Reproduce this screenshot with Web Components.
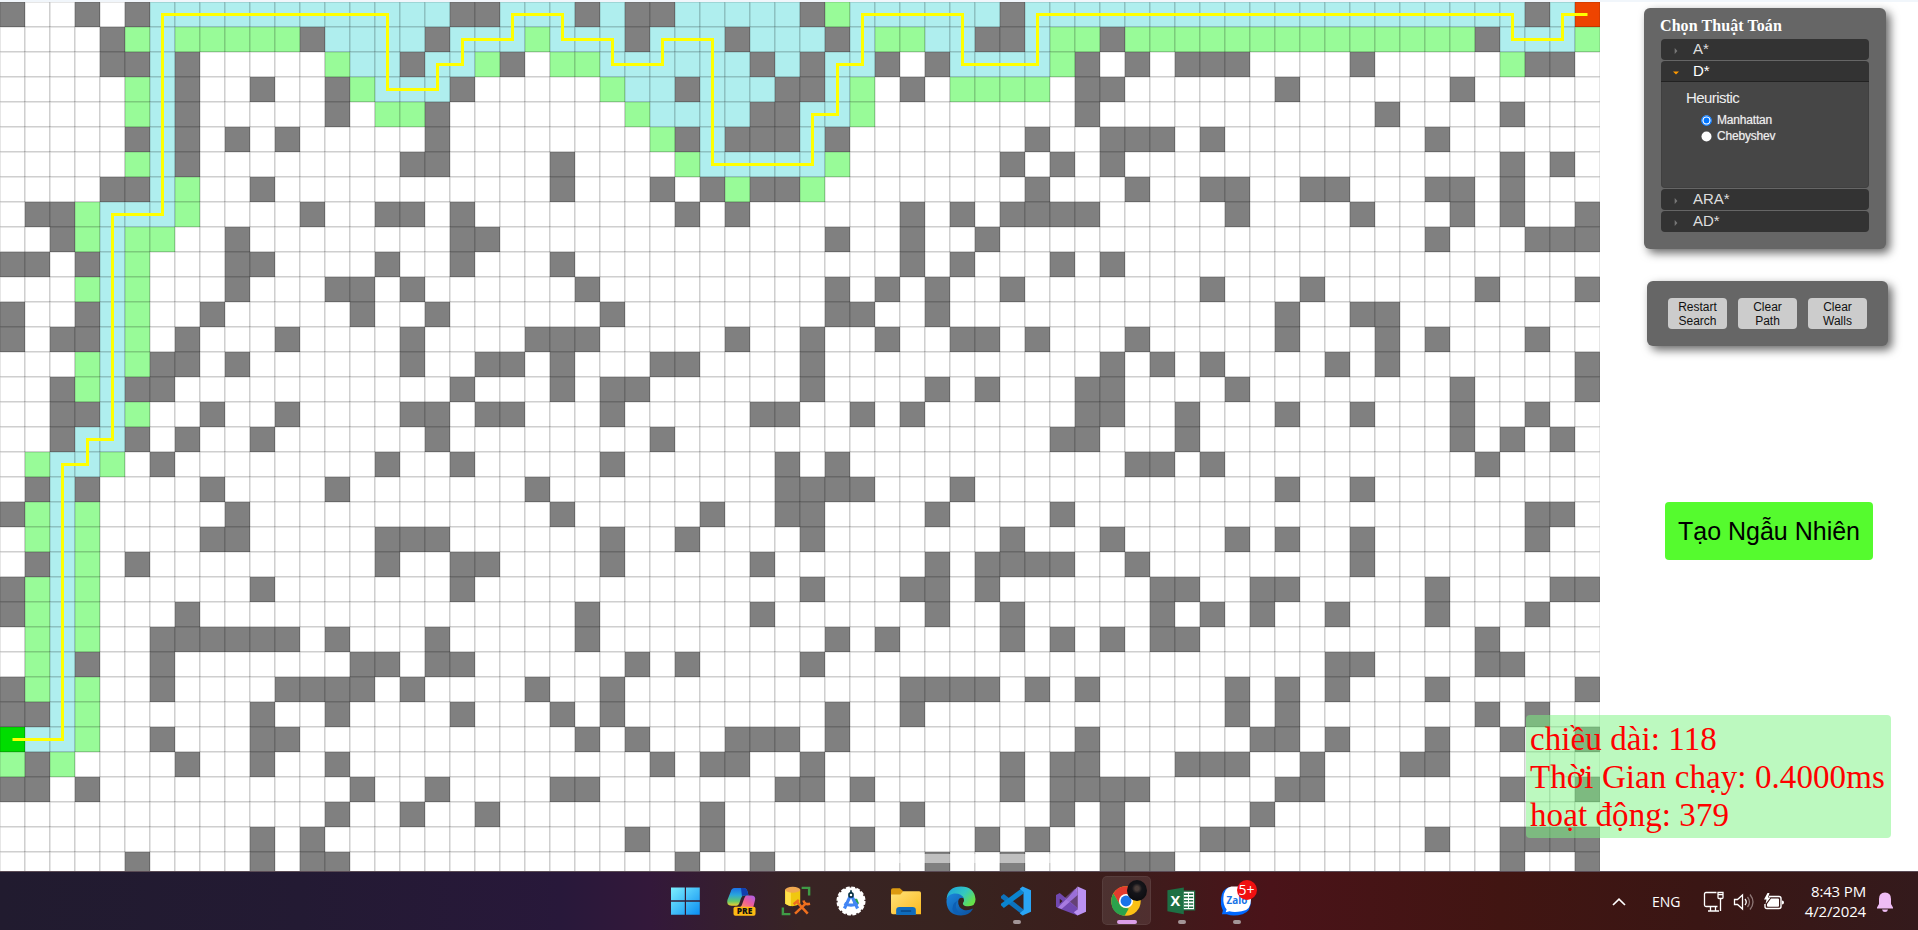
<!DOCTYPE html>
<html lang="vi">
<head>
<meta charset="utf-8">
<title>PathFinding</title>
<style>
html,body{margin:0;height:100%;background:#fff}
body{overflow:hidden;font-family:"Liberation Sans",Arial,sans-serif}
</style>
</head>
<body>
<path-app></path-app>
<script>
const define = (name, html, init) => customElements.define(name, class extends HTMLElement {
  constructor() {
    super();
    this.attachShadow({ mode: 'open' }).innerHTML = html;
  }
  connectedCallback() { if (init && !this.ready) { this.ready = true; init.call(this, this.shadowRoot); } }
});

// '#' wall, 'g' opened, 'b' closed, 'S' start, 'E' end, '.' free
const ROWS = `
#..#.#bbbbbbbbbb bb##bbb#b##bbbbb #gbbbbbb#bbbbbbb bbbbbbbbbbbbb#bE
....#gbggggg#bbb b#bbbgbbb#bbb#bb b#bggbb##bgg#ggg ggggggggggg#bbbg
....##b#.....gbb #bbg#.ggbbbbbb#b #bb#.#bbbbg#.#.# ##....#.....g##.
.....gb#..#..#gb bb#.....gbb#bbb# #bg.#.gggg.##... ...#......#.....
.....gb#.....#.g g#.......gbbbb## bbg........#.... .......#....#...
.....#b#.#.#.... .#........g#b### b#.......#..###. #........#......
.....gb#........ ##....#....gbbbb bg......#.#.#... ............#.#.
....##bg..#..... ......#...#.#g## g........#...#.. ##..##...##.#...
.##gbbbg....#..# #.#........#.#.. ....#.#.####.... .#....#...#.#..#
..#gbgg..#...... ..##............ .#..#..#........ .........#...###
##.#bg...##....# ..#...#......... ....#.#...#.#... ................
...gbg...#...##. #......#........ .#.#.#..#....... #...#......#...#
#..#bg..#.....#. .#......#....... .##..#.......... ...#..##........
#.##bg.#...#.... #....###.....#.. #..#..##.#...#.. ...#...#.#...#..
...gbg##.#...... #..##.#...##.... #...........#.#. #....#.#.......#
..#gb##......... ..#...#.##...... #....#.#...##... .#........#....#
..##bg..#..#.... ##.##...#.....## ..#.#......##..# ...#..#...#..#..
..#bb#.#..#..... .#........#..... ..........##...# ..........#.#.#.
.gbbg.#........# ..#.....#......# .#...........##. #..........#....
.#b#....#....#.. .....#.........# ###...#......... ...#..#.........
#gbg.....#...... ......#.....#..# #....#....#..... .............##.
.gbg....##.....# ##......#..#.... #.......#...#... .#.#..#......#..
.#bg.#.........# ..##....#.....#. .....#.####..#.. ......#.........
#gbg......#..... ..#............. #...##.#......## ..##.....#....##
#gbg...#........ .......#......#. .....#..#.....#. #.#..#...#...#..
.gbg..######.#.. .#.....#........ .#.#....#.#.#.## ...........#....
.gb#..#.......## .##......#.#.... #............... .....##....##...
#gbg..#....####. #....#..#....... ....####.#.#.... .#.#.#...#.....#
##bg......#..#.. ..#...#.#....... .#..#........... .#.#.......#.#..
Sbbg..#...##.... .......#.#...### .#.........#.... ..##.#...#..#..#
g#g....#..#..#.. ..........#.##.. #.......#.##...# ##..#...##......
##.#..........#. .#....##.......# #.#.....#.####.. ...##.......#..#
.............#.. #..#........#... ....#.....#.#... ..#.............
..........#.#... .........#..#... ..#....#.#..#... ##.......#..####
.....#....#.##.. ...........#..#. .....#..#...###. ............#..#`
  .trim().split('\n').map(r => r.replace(/ /g, ''));

const ROUTE = [[0,29],[2,29],[2,18],[3,18],[3,17],[4,17],[4,8],[6,8],[6,0],[15,0],[15,3],[17,3],[17,2],[18,2],[18,1],[20,1],[20,0],[22,0],[22,1],[24,1],[24,2],[26,2],[26,1],[28,1],[28,6],[32,6],[32,4],[33,4],[33,2],[34,2],[34,0],[38,0],[38,2],[41,2],[41,0],[60,0],[60,1],[62,1],[62,0],[63,0]];

define('grid-board', `
<style>
:host{display:block;position:relative;width:1600px;height:869px;overflow:hidden}
svg{display:block}
rect{stroke:#000;stroke-opacity:.2;fill:#fff}
.w{fill:#808080}.g{fill:#98fb98}.b{fill:#afeeee}.S{fill:#00dd00}.E{fill:#ee4400}
path{fill:none;stroke:#ff0;stroke-width:3}
.veil{position:absolute;left:885px;top:852px;width:180px;height:9px;background:rgba(255,255,255,.5)}
</style>
<svg width="1600" height="875" viewBox="0 0 1600 875"></svg><div class="veil"></div>`, function (root) {
  const svg = root.querySelector('svg');
  let s = '';
  ROWS.forEach((row, y) => [...row].forEach((c, x) => {
    s += `<rect class="${c === '#' ? 'w' : c === '.' ? 'f' : c}" x="${x * 25}" y="${y * 25}" width="25" height="25"/>`;
  }));
  s += `<path d="M${ROUTE.map(([x, y]) => `${x * 25 + 12.5} ${y * 25 + 12.5}`).join('L')}"/>`;
  svg.innerHTML = s;
});

define('float-panel', `
<style>
:host{display:block;box-sizing:border-box;background:#666;border-radius:6px;box-shadow:4px 4px 10px rgba(0,0,0,.6)}
</style><slot></slot>`);

define('algo-item', `
<style>
:host{display:block;margin-bottom:1px;letter-spacing:0}
.h{box-sizing:border-box;height:21px;background:#333;border-radius:4px;display:flex;align-items:center;padding-left:12px;font-size:15px;line-height:18px;color:#ddd}
svg{width:6px;height:8px;margin-right:14px;position:relative;top:1px}
.h span{position:relative;top:-1px}
.c{display:none}
:host([open]) .h{border-radius:4px 4px 0 0;color:#fff;box-shadow:inset 0 -1px #222}
:host([open]) .c{display:block;box-sizing:border-box;height:106px;background:#464646;border:1px solid #404040;border-top:0;border-radius:0 0 4px 4px;padding:7px 0 0 24px}
.d{display:none}
:host([open]) .d{display:block}:host([open]) .r{display:none}
</style>
<div class="h"><svg viewBox="0 0 6 8"><path class="r" d="M1.700 1 4.400 4 1.700 7z" fill="#777"/><path class="d" d="M0 2.500h6L3 5.500z" fill="#f90"/></svg><span></span></div>
<div class="c"><slot></slot></div>`, function (root) {
  root.querySelector('.h span').textContent = this.getAttribute('label');
});

define('radio-row', `
<style>
:host{display:flex;align-items:center;height:16px;padding-left:15px;font-size:12px;line-height:16px;color:#eee;letter-spacing:-.19px;text-shadow:0 0 1px rgba(255,255,255,.5)}
svg{width:11px;height:11px;margin-right:5px}
.on{display:none}
:host([checked]) .on{display:block}
</style>
<svg viewBox="0 0 11 11"><circle cx="5.500" cy="5.500" r="5" fill="#fff"/><g class="on"><circle cx="5.500" cy="5.500" r="4.700" fill="#fff" stroke="#0075ff" stroke-width="1.200"/><circle cx="5.500" cy="5.500" r="2.900" fill="#0075ff"/></g></svg><slot></slot>`);

define('heuristic-options', `
<style>
:host{display:block}
.t{font-size:15px;line-height:18px;letter-spacing:-.57px;color:#eee;margin-bottom:5px}
</style>
<div class="t">Heuristic</div>
<radio-row checked>Manhattan</radio-row><radio-row>Chebyshev</radio-row>`);

define('ctl-button', `
<style>
:host{display:flex;align-items:center;justify-content:center;box-sizing:border-box;width:59px;height:31px;background:#ccc;border-radius:4px;font-size:12px;line-height:14px;text-align:center;color:#111}
</style><span><slot></slot></span>`);

define('stats-box', `
<style>
:host{display:block;box-sizing:border-box;width:365px;height:123px;padding:5px 4px;background:rgba(121,243,128,.5);border-radius:4px;color:red;font:33px/38px "Liberation Serif","Times New Roman",serif;letter-spacing:.08px;white-space:nowrap}
</style>
<div>chiều dài: 118</div><div>Thời Gian chạy: 0.4000ms</div><div>hoạt động: 379</div>`);

define('side-bar', `
<style>
:host{display:flex;flex-direction:column;width:318px}
.algo{width:242px;height:241px;margin:6px 0 0 44px;padding:8px 17px 0}
h3{margin:0 0 4px -1px;font:bold 16px/19px "Liberation Serif","Times New Roman",serif;letter-spacing:.08px;color:#fff;white-space:nowrap}
.ctl{width:241px;height:65px;margin:32px 0 0 47px;padding:17px 21px;display:flex;gap:11px}
.rnd{width:208px;height:58px;margin:156px 0 0 65px;border:0;padding:0;border-radius:4px;background:#55fb2e;color:#000;font:25px "Liberation Sans",Arial,sans-serif}
</style>
<float-panel class="algo"><h3>Chọn Thuật Toán</h3>
<algo-item label="A*"></algo-item>
<algo-item label="D*" open><heuristic-options></heuristic-options></algo-item>
<algo-item label="ARA*"></algo-item>
<algo-item label="AD*"></algo-item></float-panel>
<float-panel class="ctl"><ctl-button>Restart<br>Search</ctl-button><ctl-button>Clear<br>Path</ctl-button><ctl-button>Clear<br>Walls</ctl-button></float-panel>
<button class="rnd">Tạo Ngẫu Nhiên</button>`);

const ICONS = {
  win: `<defs><linearGradient id="a" x1="0" y1="0" x2="1" y2="1"><stop offset="0" stop-color="#7df0ff"/><stop offset="1" stop-color="#0a8df2"/></linearGradient></defs><path fill="url(#a)" d="M0 1.500h14.700V15.300H0zM16 1.500h14.700v13.800H16zM0 16.700h14.700v14H0zM16 16.700h14.700v14H16z"/>`,
  copilot: `<defs><linearGradient id="a" x1="0" y1="0" x2="0" y2="1"><stop offset="0" stop-color="#1b6fe8"/><stop offset=".4" stop-color="#2aa6dc"/><stop offset=".75" stop-color="#62c76a"/><stop offset="1" stop-color="#f0cf30"/></linearGradient><linearGradient id="b" x1="1" y1="0" x2="0" y2="1"><stop offset="0" stop-color="#a45df0"/><stop offset=".5" stop-color="#ee5d98"/><stop offset="1" stop-color="#ff9b5a"/></linearGradient></defs><path fill="url(#a)" d="M9 2h10q3 0 4 4l1 4h-5q-2 0-3 3l-2 6q-1 2-3 2H6q-6 0-4.500-6L5 6Q6 2 9 2z"/><path fill="#123fae" d="M16 2h3q3 0 4 4l1 4h-5q-1 0-2 1z"/><path fill="url(#b)" d="M22 10h5q5 0 4 5l-2 8H13q3 0 4-3l2.500-7q1-3 2.500-3z"/><rect x="8" y="22" width="23.500" height="9.600" rx="2" fill="#fdb913"/><text x="19.800" y="30.100" text-anchor="middle" font-family="Open Sans,sans-serif" font-weight="800" font-size="9" fill="#111">PRE</text>`,
  db: `<path d="M22 2h8v8M2 23v7h8" fill="none" stroke="#3f9b46" stroke-width="2.600"/><path d="M4.500 4v15q7 5 16 0V4z" fill="#f0c80f"/><path d="M4.500 4v15q3 2 6 2.500V4z" fill="#ffe04a"/><ellipse cx="12.500" cy="4" rx="8" ry="3.200" fill="#f0a850"/><path d="M15 29.500 26 19M17.500 17.500l11 12M13.500 19.500l5.500-4.500M24 15.500q1 5 7 3.500" fill="none" stroke="#ee6f1e" stroke-width="2.700"/>`,
  astudio: `<circle cx="16" cy="16" r="14.300" fill="#fff" stroke="#fff" stroke-width="2.400" stroke-dasharray="4 1.600"/><path fill="#2ea44f" d="M19 13.500h3.500l2 5-2 2-4-1z"/><path d="M15 11 9 24M17 11l6 13M9 18.500q7 4 14 0" fill="none" stroke="#4285f4" stroke-width="3.400"/><circle cx="16" cy="9.500" r="2.200" fill="#fff" stroke="#073042" stroke-width="1.700"/><path d="M16 4.500v3" stroke="#073042" stroke-width="1.800"/>`,
  folder: `<defs><linearGradient id="a" x1="0" y1="0" x2="1" y2="1"><stop offset="0" stop-color="#ffe37a"/><stop offset="1" stop-color="#fbb91f"/></linearGradient></defs><path fill="#dc9a10" d="M0 4.500q0-2 2-2h7.500l3.500 3-1 5H0z"/><path fill="url(#a)" d="M0 9h10l3-3.500h17q2 0 2 2v22.500H2q-2 0-2-2z"/><path fill="#0f6cbd" d="M5.500 31v-5q0-3.500 3.500-3.500h14q3.500 0 3.500 3.500v5z"/><path d="M10.500 26.700h11" stroke="#0a4a8a" stroke-width="1.700"/>`,
  edge: `<defs><linearGradient id="a" x1="0" y1="0" x2="1" y2=".6"><stop offset="0" stop-color="#1aa0e0"/><stop offset=".6" stop-color="#34c8c0"/><stop offset="1" stop-color="#66e04a"/></linearGradient><linearGradient id="b" x1="0" y1="0" x2="1" y2="1"><stop offset="0" stop-color="#1b86dc"/><stop offset="1" stop-color="#0c4f9c"/></linearGradient></defs><path fill="url(#a)" d="M.5 14Q2 .5 16 .5t15.500 13.500q0 7.500-7.500 7.500h-2q-4 0-4-3 2-2 1-5-2-4-7-4Q4 9 .5 14z"/><path fill="url(#b)" d="M.5 17q0-8 8-9 8-.5 10.500 5-5-1.500-6 3-.5 7 6 9.500 5 1 10-1.500Q25 31.500 16 31.500 1.500 31 .5 17z"/><path fill="#0d5fb4" d="M13.500 15q-5 4-2 10 3 5 8 5.500Q12 32 8 28 4 20 13.500 15z"/>`,
  vscode: `<path fill="#0d72bd" d="m0 11 3-2.500L24 25v6.500L0 13z"/><path fill="#0a84d0" d="m0 20.500 3 3L24 8V1L0 19z"/><path fill="#2aa5f5" d="m23 .5 9 4v23l-9 4-3-2.500 4-3.500V6.500L20 3z"/>`,
  vs: `<path fill="#7148b0" d="M0 9.500 4 7.500l19 16v8L2 23.500 0 22zm4 4v5.500l3-3z"/><path fill="#a77be0" d="M23 .5v9L6 24.500 2 23l11-11z"/><path fill="#bb92f2" d="m23 .5 9 4v23l-9 4-4-3.500 4-3z"/><path fill="#8f63cf" d="M9 13 20 3l3 5v16z" opacity=".5"/>`,
  chrome: `<circle cx="16" cy="16" r="15.700" fill="#fbc116"/><path fill="#e33b2e" d="M2.500 8Q7 .3 16 .3T29.500 8.500H16L9.500 20z"/><path fill="#2ba24c" d="M2.500 8 9.600 20q2.400 3.500 6.400 3.500l3 .5-4.500 7.700Q.3 30 .3 16q0-4.500 2.200-8z"/><circle cx="16" cy="16" r="7.500" fill="#fff"/><circle cx="16" cy="16" r="5.800" fill="#1a73e8"/>`,
  excel: `<path fill="#fff" stroke="#1d7044" stroke-width="1.300" d="M17 5.500h13.500v20H17z"/><path stroke="#1d7044" stroke-width="1.600" d="M19 8.700h10M19 12.200h10M19 15.700h10M19 19.200h10M19 22.700h10" stroke-dasharray="4.500 1"/><path fill="#1d7044" d="M1.500 4.500 19 1.500v28.500L1.500 27z"/><text x="10" y="21.500" text-anchor="middle" font-family="Open Sans,sans-serif" font-weight="700" font-size="15.500" fill="#fff">X</text>`,
  zalo: `<path fill="#0068ff" d="M9 1h12q11 1 11 14t-9 15q-10 3-17 0H1l1-4Q-1 20 0 13 1 3 9 1z"/><path fill="#fff" d="M11 .5h10Q32 2 32 14t-10 13q-8 1.500-13 0l-4 1 1-3Q2 20 2.500 13 3 2 11 .5z"/><text x="17" y="19" text-anchor="middle" font-family="Open Sans,sans-serif" font-weight="700" font-size="10.500" fill="#1673e6">Zalo</text>`
};

define('task-icon', `
<style>
:host{display:block;position:relative;width:49px;height:49px;border-radius:5px;box-sizing:border-box}
:host([active]){background:rgba(255,255,255,.09);box-shadow:inset 0 0 0 1px rgba(255,255,255,.06)}
svg{display:block;width:30px;height:30px;margin:10px auto 0}
.u{position:absolute;bottom:1px;left:21px;width:8px;height:4px;border-radius:2px;background:#a39597;display:none}
:host([run]) .u{display:block}
:host([active]) .u{left:15px;width:20px;background:#dc9fe8;display:block}
.p{display:none;position:absolute;left:25px;top:4px;width:20px;height:21px;border-radius:50%;background:radial-gradient(circle at 50% 40%,#4a3d39 0 2px,#15151a 5px,#08080b)}
:host([active]) .p{display:block}
::slotted(b){position:absolute;left:25px;top:4px;width:20px;height:20px;border-radius:50%;background:#f01010;color:#fff;font:14px/20px "Open Sans",sans-serif;text-align:center}
</style><svg viewBox="0 0 32 32"></svg><i class="u"></i><i class="p"></i><slot></slot>`, function (root) {
  root.querySelector('svg').innerHTML = ICONS[this.getAttribute('name')];
});

define('system-tray', `
<style>
:host{display:flex;align-items:center;color:#fff;font-family:"Open Sans","Noto Sans",sans-serif}
svg{display:block;flex:none}
.l{font-size:14px;margin:0 21px 0 26px;width:30px}
.t{font-size:15px;line-height:20px;text-align:right;width:70px;margin:0 11px 0 11px;letter-spacing:-.15px;white-space:nowrap;position:relative;top:-1px}
</style>
<svg width="14" height="8" viewBox="0 0 14 8"><path d="M1 7 7 1.200 13 7" fill="none" stroke="#fff" stroke-width="1.700"/></svg>
<span class="l">ENG</span>
<svg width="21" height="21" viewBox="0 0 21 21" fill="none" stroke="#fff" stroke-width="1.300"><path d="M13.500 1.500H3Q1.500 1.500 1.500 3v11q0 1.500 1.500 1.500h11.500M7.500 15.500v4M12.500 15.500v4M5 20h11M15 1.500h5v5q0 1-1 1h-3q-1 0-1-1zM17.500 7.500V20M15 3.700h5"/></svg>
<svg width="22" height="20" viewBox="0 0 22 20" fill="none" stroke="#fff" stroke-width="1.300" style="margin-left:9px"><path d="M1.500 7.500h3L9.500 3v14l-5-4.500h-3zM12 7q2.500 3 0 6"/><path d="M14.500 5q4 5 0 10M17 2.500q6 7.500 0 15" stroke="#8d7675"/></svg>
<svg width="22" height="18" viewBox="0 0 22 18" style="margin-left:8px"><path d="M6 3.500h10q2 0 2 2v8q0 2-2 2H4q-2 0-2-2V11" fill="none" stroke="#fff" stroke-width="1.400"/><path d="M8 5.500h7q1 0 1 1V13q0 .8-1 .8H5q-1 0-1-1V11zM19 7.500q2 0 2 2t-2 2zM4.500 0 1 6.500h2.500L2.500 11 7.500 4.500H5L6.500 0z" fill="#fff"/></svg>
<div class="t">8:43 PM<br>4/2/2024</div>
<svg width="16" height="20" viewBox="0 0 16 20"><path fill="#efbdf5" d="M8 .5q6 0 6 6.500v5l2 3.500v1H0v-1L2 12V7Q2 .5 8 .5zM5 17.500h6Q10.500 20 8 20t-3-2.500z"/></svg>`);

define('task-bar', `
<style>
:host{display:grid;grid-template-columns:1fr auto 1fr;box-sizing:border-box;height:59px;border-top:1px solid #5a4b55;background:linear-gradient(90deg,#211b2f 0,#231a33 300px,#28183a 560px,#33183a 650px,#382424 800px,#38231f 960px,#3c1d1c 1120px,#4a1319 1270px,#411512 1500px,#3a1614 1700px,#341a1c 1918px)}
.apps{grid-column:2;display:flex;gap:6px;padding-top:4px;position:relative;left:2px}
system-tray{justify-self:end;margin-right:25px;padding-top:1px}
</style>
<div class="apps">
<task-icon name="win"></task-icon><task-icon name="copilot"></task-icon><task-icon name="db"></task-icon><task-icon name="astudio"></task-icon><task-icon name="folder"></task-icon><task-icon name="edge"></task-icon><task-icon name="vscode" run></task-icon><task-icon name="vs"></task-icon><task-icon name="chrome" active></task-icon><task-icon name="excel" run></task-icon><task-icon name="zalo" run><b>5+</b></task-icon>
</div>
<system-tray></system-tray>`);

define('path-app', `
<style>
:host{display:flex;flex-direction:column;width:1918px;height:930px;background:#fff;position:relative}
.strip{height:2px;background:#f1f6fb}
main{display:flex;height:869px;overflow:hidden}
stats-box{position:absolute;left:1526px;top:715px}
</style>
<div class="strip"></div>
<main><grid-board></grid-board><side-bar></side-bar></main>
<task-bar></task-bar>
<stats-box></stats-box>`);
</script>
</body>
</html>
